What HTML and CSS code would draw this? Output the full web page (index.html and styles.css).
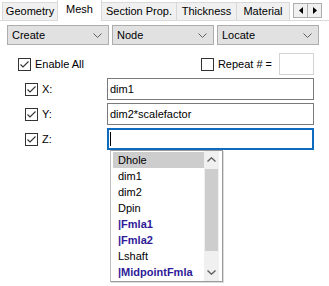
FILE: index.html
```html
<!DOCTYPE html>
<html lang="en">
<head>
  <meta charset="UTF-8" />
  <title>Mesh</title>
  <link rel="stylesheet" href="styles.css">
</head>
<body>
  <div class="tabs">
    <div class="tab">Geometry</div>
    <div class="tab active">Mesh</div>
    <div class="tab">Section Prop.</div>
    <div class="tab">Thickness</div>
    <div class="tab clip">Material</div>
    <div class="arrows">
      <span class="arrow"><svg width="4" height="7" viewBox="0 0 4 7"><path d="M4 0 L0 3.5 L4 7 Z" fill="#000"/></svg></span>
      <span class="arrow"><svg width="4" height="7" viewBox="0 0 4 7"><path d="M0 0 L4 3.5 L0 7 Z" fill="#000"/></svg></span>
    </div>
  </div>

  <div class="combos">
    <div class="combo">Create<svg class="chev" width="9" height="5" viewBox="0 0 9 5"><polyline points="0.5,0.5 4.5,4.5 8.5,0.5" fill="none" stroke="#606060"/></svg></div>
    <div class="combo">Node<svg class="chev" width="9" height="5" viewBox="0 0 9 5"><polyline points="0.5,0.5 4.5,4.5 8.5,0.5" fill="none" stroke="#606060"/></svg></div>
    <div class="combo">Locate<svg class="chev" width="9" height="5" viewBox="0 0 9 5"><polyline points="0.5,0.5 4.5,4.5 8.5,0.5" fill="none" stroke="#606060"/></svg></div>
  </div>

  <div class="opts">
    <span class="check on"><svg width="11" height="11" viewBox="0 0 11 11"><polyline points="1.5,5.5 4,8 9.5,2.5" fill="none" stroke="#333" stroke-width="1.1"/></svg></span>
    <span class="lbl">Enable All</span>
    <span class="check repeat"></span>
    <span class="lbl">Repeat # =</span>
    <span class="repbox"></span>
  </div>

  <div class="row">
    <span class="check on"><svg width="11" height="11" viewBox="0 0 11 11"><polyline points="1.5,5.5 4,8 9.5,2.5" fill="none" stroke="#333" stroke-width="1.1"/></svg></span>
    <span class="lbl">X:</span>
    <div class="input">dim1</div>
  </div>
  <div class="row">
    <span class="check on"><svg width="11" height="11" viewBox="0 0 11 11"><polyline points="1.5,5.5 4,8 9.5,2.5" fill="none" stroke="#333" stroke-width="1.1"/></svg></span>
    <span class="lbl">Y:</span>
    <div class="input">dim2*scalefactor</div>
  </div>
  <div class="row">
    <span class="check on"><svg width="11" height="11" viewBox="0 0 11 11"><polyline points="1.5,5.5 4,8 9.5,2.5" fill="none" stroke="#333" stroke-width="1.1"/></svg></span>
    <span class="lbl">Z:</span>
    <div class="input focus"><span class="caret"></span></div>
  </div>

  <div class="popup">
    <ul class="list">
      <li class="sel">Dhole</li>
      <li>dim1</li>
      <li>dim2</li>
      <li>Dpin</li>
      <li class="fmla">|Fmla1</li>
      <li class="fmla">|Fmla2</li>
      <li>Lshaft</li>
      <li class="fmla">|MidpointFmla</li>
    </ul>
    <div class="sbar">
      <div class="sbtn"><svg width="9" height="5" viewBox="0 0 9 5"><polyline points="0.5,4.5 4.5,0.8 8.5,4.5" fill="none" stroke="#606060" stroke-width="1.4"/></svg></div>
      <div class="strack"><div class="thumb"></div></div>
      <div class="sbtn"><svg width="9" height="5" viewBox="0 0 9 5"><polyline points="0.5,0.5 4.5,4.2 8.5,0.5" fill="none" stroke="#606060" stroke-width="1.4"/></svg></div>
    </div>
  </div>
</body>
</html>
```

FILE: styles.css
```css
html, body { margin: 0; padding: 0; background: #fff; }
body { font-family: "Liberation Sans", Arial, sans-serif; font-size: 11px; color: #000; width: 329px; height: 286px; overflow: hidden; position: relative; }

.tabs { display: flex; align-items: flex-end; height: 20px; padding-left: 2px; border-bottom: 1px solid #d9d9d9; }
.tab { height: 17px; line-height: 17px; background: #f0f0f0; border: 1px solid #d9d9d9; border-bottom: none; margin-left: -1px; box-sizing: content-box; text-align: center; flex: none; }
.tab:first-child { margin-left: 0; }
.tab:nth-child(1) { width: 54px; }
.tab:nth-child(2) { width: 43px; }
.tab:nth-child(3) { width: 74px; }
.tab:nth-child(4) { width: 59px; }
.tab.clip { width: 52px; }
.tab.active { background: #fff; height: 21px; line-height: 18px; margin-bottom: -1px; position: relative; z-index: 1; }
.arrows { display: flex; margin-left: 4px; align-self: flex-start; margin-top: 3px; }
.arrow { width: 13px; height: 13px; border: 1px solid #adadad; background: #f0f0f0; display: flex; align-items: center; justify-content: center; margin-left: -1px; }

.combos { display: flex; gap: 3px; padding: 4px 0 0 7px; }
.combo { width: 102px; height: 20px; box-sizing: border-box; border: 1px solid #adadad; background: #e1e1e1; padding-left: 4px; line-height: 18px; display: flex; justify-content: space-between; align-items: center; padding-right: 6px; }

.opts { display: flex; align-items: center; height: 22px; margin-top: 8px; padding-left: 18px; }
.check { width: 13px; height: 13px; box-sizing: border-box; border: 1px solid #333; background: #fff; display: flex; align-items: center; justify-content: center; flex: none; }
.lbl { margin-left: 4px; }
.check.repeat { margin-left: auto; }
.repbox { width: 35px; height: 22px; box-sizing: border-box; border: 1px solid #d4d4d4; margin-left: 7px; margin-right: 15px; }

.row { display: flex; align-items: center; height: 22px; margin-top: 3px; padding-left: 25px; }
.input { margin-left: auto; margin-right: 15px; width: 207px; height: 22px; box-sizing: border-box; border: 1px solid #7a7a7a; padding-left: 2px; line-height: 20px; }
.input.focus { border: 2px solid #0f6cbd; padding-left: 1px; display: flex; align-items: center; }
.caret { width: 1px; height: 14px; background: #000; }

.popup { position: absolute; left: 110px; top: 150px; width: 113px; height: 132px; box-sizing: border-box; border: 1px solid #9a9a9a; border-left-color: #bdbdbd; box-shadow: 1px 1px 0 #dcdcdc; background: #fff; display: flex; padding: 1px 3px 0 0; }
.list { list-style: none; margin: 0; padding: 0 0 0 2px; width: 93px; box-sizing: border-box; }
.list li { height: 16px; line-height: 16px; padding-left: 5px; white-space: nowrap; overflow: hidden; }
.list li.sel { background: #cdcdcd; }
.list li.fmla { font-weight: bold; color: #2e1b98; }
.sbar { width: 15px; flex: none; display: flex; flex-direction: column; background: #f0f0f0; margin-top: -1px; }
.sbtn { height: 17px; display: flex; align-items: center; justify-content: center; }
.strack { flex: 1; display: flex; flex-direction: column; padding: 1px 1px 12px; }
.thumb { height: 82px; background: #cdcdcd; }
```
